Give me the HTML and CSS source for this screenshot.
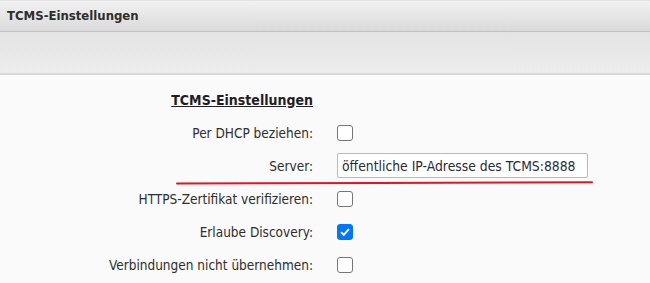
FILE: index.html
```html
<!DOCTYPE html>
<html lang="de">
<head>
    <meta charset="UTF-8">
    <title>TCMS-Einstellungen</title>
    <link rel="stylesheet" href="styles.css">
</head>
<body>
    <div class="titlebar">TCMS-Einstellungen</div>
    <div class="toolbar"></div>
    <div class="content">
        <form class="settings">
            <div class="section-title">TCMS-Einstellungen</div>
            <div></div>

            <label for="dhcp">Per DHCP beziehen:</label>
            <div class="field"><input type="checkbox" id="dhcp"></div>

            <label for="server">Server:</label>
            <div class="field"><input type="text" id="server" class="text-input" value="öffentliche IP-Adresse des TCMS:8888"></div>

            <label for="https">HTTPS-Zertifikat verifizieren:</label>
            <div class="field"><input type="checkbox" id="https"></div>

            <label for="discovery">Erlaube Discovery:</label>
            <div class="field"><input type="checkbox" id="discovery" checked></div>

            <label for="keep">Verbindungen nicht übernehmen:</label>
            <div class="field"><input type="checkbox" id="keep"></div>
        </form>
        <svg class="mark" width="418" height="6" viewBox="0 0 418 6">
            <path d="M1 3.6 C 120 3.4, 300 2.6, 416 2.2" stroke="#e8141c" stroke-width="2" fill="none" stroke-linecap="round"/>
        </svg>
    </div>
</body>
</html>
```

FILE: styles.css
```css
body {
    margin: 0;
    background-color: #fafafa;
    font-family: "DejaVu Sans Condensed", "DejaVu Sans", Tahoma, sans-serif;
    color: #2e2e2e;
}
.titlebar {
    height: 30px;
    line-height: 30px;
    padding-left: 7px;
    font-size: 13px;
    font-weight: bold;
    color: #2d2d2d;
    background: linear-gradient(#f1f1f1, #dadada);
    border-top: 1px solid #e2e2e2;
    border-bottom: 1px solid #c6c0c0;
}
.toolbar {
    height: 41px;
    background: linear-gradient(#e4e4e4, #ececec);
    border-bottom: 2px solid #d8d8d8;
}
.content {
    position: relative;
    padding-top: 8px;
}
.settings {
    display: grid;
    grid-template-columns: 313px auto;
    grid-auto-rows: 33px;
    column-gap: 24px;
    align-items: center;
    font-size: 13.5px;
}
.settings label,
.section-title {
    text-align: right;
}
.section-title {
    font-weight: bold;
    font-size: 14px;
    text-decoration: underline;
    color: #1e1e24;
}
.field {
    display: flex;
    align-items: center;
}
.field input[type="checkbox"] {
    appearance: none;
    margin: 0;
    width: 16px;
    height: 16px;
    border: 1.5px solid #767676;
    border-radius: 3px;
    background: #fff;
    box-sizing: border-box;
}
.field input[type="checkbox"]:checked {
    border-color: #0075ff;
    background: #0075ff url("data:image/svg+xml,%3Csvg xmlns='http://www.w3.org/2000/svg' viewBox='0 0 16 16'%3E%3Cpath d='M3.5 8.2 L6.6 11.2 L12.5 4.6' stroke='white' stroke-width='2.2' fill='none'/%3E%3C/svg%3E") center / 100% no-repeat;
}
.text-input {
    width: 251px;
    height: 25px;
    box-sizing: border-box;
    margin: 0;
    padding: 0 4px;
    border: 1px solid #b9b9b9;
    border-radius: 2px;
    background: #fff;
    font-family: inherit;
    font-size: 13.8px;
    color: #2a2a3a;
}
.mark {
    position: absolute;
    left: 176px;
    top: 105px;
}
```
